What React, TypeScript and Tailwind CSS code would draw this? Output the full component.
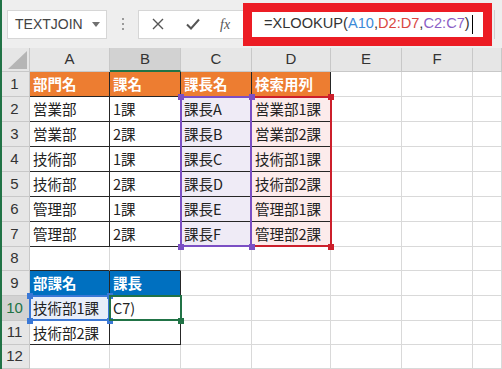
import React from "react";

const COLS = [30, 80, 71, 71, 79, 71, 71, 29];
const ROWS = [25, 25, 25, 25, 25, 25, 25, 24, 25, 25, 24, 24];
const LETTERS = ["A", "B", "C", "D", "E", "F", ""];

type Cell = { text?: string; kind?: "orange" | "blue" | "purple" | "pink" | "ref" | "plain" };

const data: Record<number, Cell[]> = {
  1: [
    { text: "部門名", kind: "orange" },
    { text: "課名", kind: "orange" },
    { text: "課長名", kind: "orange" },
    { text: "検索用列", kind: "orange" },
  ],
  2: [{ text: "営業部" }, { text: "1課" }, { text: "課長A", kind: "purple" }, { text: "営業部1課", kind: "pink" }],
  3: [{ text: "営業部" }, { text: "2課" }, { text: "課長B", kind: "purple" }, { text: "営業部2課", kind: "pink" }],
  4: [{ text: "技術部" }, { text: "1課" }, { text: "課長C", kind: "purple" }, { text: "技術部1課", kind: "pink" }],
  5: [{ text: "技術部" }, { text: "2課" }, { text: "課長D", kind: "purple" }, { text: "技術部2課", kind: "pink" }],
  6: [{ text: "管理部" }, { text: "1課" }, { text: "課長E", kind: "purple" }, { text: "管理部1課", kind: "pink" }],
  7: [{ text: "管理部" }, { text: "2課" }, { text: "課長F", kind: "purple" }, { text: "管理部2課", kind: "pink" }],
  9: [
    { text: "部課名", kind: "blue" },
    { text: "課長", kind: "blue" },
  ],
  10: [{ text: "技術部1課", kind: "ref" }, { text: "C7)" }],
  11: [{ text: "技術部2課" }, { text: "" }],
};

const fillFor: Record<string, string> = {
  orange: "bg-[#ed7d31] text-white font-bold",
  blue: "bg-[#0070c0] text-white font-bold",
  purple: "bg-[#efebf6] text-[#222]",
  pink: "bg-[#fcebeb] text-[#222]",
  ref: "bg-[#e8eef9] text-[#222]",
  plain: "bg-white text-[#222]",
};

function inTable(row: number, col: number) {
  if (row >= 1 && row <= 7 && col <= 3) return true;
  if (row >= 9 && row <= 11 && col <= 1) return true;
  return false;
}

function Handle({ x, y, color }: { x: number; y: number; color: string }) {
  return (
    <div
      className="absolute w-[6px] h-[6px]"
      style={{ left: x - 3, top: y - 3, background: color }}
    />
  );
}

function RangeBox({ x, y, w, h, color, handles }: { x: number; y: number; w: number; h: number; color: string; handles: [number, number][] }) {
  return (
    <>
      <div
        className="absolute border-2 pointer-events-none"
        style={{ left: x - 1, top: y - 1, width: w + 1, height: h + 1, borderColor: color }}
      />
      {handles.map(([hx, hy], i) => (
        <Handle key={i} x={hx} y={hy} color={color} />
      ))}
    </>
  );
}

export default function App() {
  const colX = COLS.reduce<number[]>((acc, w, i) => [...acc, (acc[i] ?? 0) + w], [0]);
  const rowY = ROWS.reduce<number[]>((acc, h, i) => [...acc, (acc[i] ?? 24) + h], [24]);

  return (
    <div className="w-[502px] h-[369px] overflow-hidden bg-white border-l-2 border-[#217346] relative font-['Liberation_Sans','Noto_Sans_CJK_JP',sans-serif]">
      {/* formula bar */}
      <div className="h-[48px] bg-[#eeeeee] flex items-center -ml-[2px] pl-[7px]">
        <div className="w-[100px] h-[29px] bg-white border border-[#d6d6d6] flex items-center pl-[7px] pr-[6px] justify-between">
          <span className="text-[14px] text-[#444]">TEXTJOIN</span>
          <span className="w-0 h-0 border-l-[4px] border-r-[4px] border-t-[5px] border-l-transparent border-r-transparent border-t-[#707070]" />
        </div>
        <div className="w-[31px] flex flex-col items-center gap-[3px]">
          <span className="w-[2px] h-[2px] bg-[#9a9a9a]" />
          <span className="w-[2px] h-[2px] bg-[#9a9a9a]" />
          <span className="w-[2px] h-[2px] bg-[#9a9a9a]" />
        </div>
        <div className="w-[105px] h-[29px] bg-white border border-r-0 border-[#d6d6d6] flex items-center">
          <svg width="12" height="12" viewBox="0 0 12 12" className="ml-[13px]">
            <path d="M1 1 L11 11 M11 1 L1 11" stroke="#555" strokeWidth="1.4" />
          </svg>
          <svg width="14" height="12" viewBox="0 0 14 12" className="ml-[22px]">
            <path d="M1 6.5 L5 10.5 L13 1.5" stroke="#555" strokeWidth="2" fill="none" />
          </svg>
          <span className="ml-[20px] text-[14px] italic text-[#555] font-['Liberation_Serif',serif]">fx</span>
        </div>
        <div className="w-[249px] h-[43px] border-[9px] border-[#ec1c24] bg-white flex items-center pl-[12px]">
          <span className="text-[14.6px] text-[#333] whitespace-nowrap">
            =XLOOKUP(<span className="text-[#3b8ad8]">A10</span>,<span className="text-[#d9473f]">D2:D7</span>,<span className="text-[#8b5fc6]">C2:C7</span>)
          </span>
          <span className="w-[1px] h-[19px] bg-black ml-[2px]" />
        </div>
        <div className="w-[3px] h-[29px] border-r border-[#cfcfcf]" />
      </div>

      {/* sheet */}
      <div className="relative -ml-[2px]">
        {/* column header */}
        <div className="flex h-[24px] bg-[#e6e6e6]">
          <div className="relative w-[30px] h-full border-r border-b border-[#c8c8c8]">
            <svg width="19" height="18" viewBox="0 0 19 18" className="absolute left-[8px] top-[3px]">
              <path d="M19 0 L19 18 L0 18 Z" fill="#b5b5b5" />
            </svg>
          </div>
          {LETTERS.map((l, i) => (
            <div
              key={i}
              style={{ width: COLS[i + 1] }}
              className={`h-full flex items-center justify-center text-[15px] text-[#333] border-r border-[#c8c8c8] ${
                i === 1 ? "bg-[#d2d2d2] border-b-2 border-b-[#217346]" : "border-b border-b-[#c8c8c8]"
              }`}
            >
              {l}
            </div>
          ))}
        </div>

        {/* rows */}
        {ROWS.map((h, ri) => {
          const row = ri + 1;
          const cells = data[row] ?? [];
          return (
            <div key={row} className="flex" style={{ height: h }}>
              <div
                className={`w-[30px] h-full flex items-center justify-center text-[15px] border-r border-b border-[#c8c8c8] ${
                  row === 10 ? "bg-[#d2d2d2] text-[#217346]" : "bg-[#e6e6e6] text-[#333]"
                }`}
              >
                {row}
              </div>
              {COLS.slice(1).map((w, ci) => {
                const cell = cells[ci];
                const table = inTable(row, ci);
                const belowIsTable = inTable(row + 1, ci);
                const rightIsTable = inTable(row, ci + 1);
                const kind = cell ? cell.kind ?? "plain" : "plain";
                return (
                  <div
                    key={ci}
                    style={{ width: w }}
                    className={`h-full flex items-center pl-[3px] text-[14.5px] whitespace-nowrap overflow-hidden border-r border-b font-['Noto_Sans_CJK_JP',sans-serif] ${
                      table || rightIsTable ? "border-r-[#262626]" : "border-r-[#d9d9d9]"
                    } ${table || belowIsTable ? "border-b-[#262626]" : "border-b-[#d9d9d9]"} ${fillFor[kind]}`}
                  >
                    {cell?.text}
                  </div>
                );
              })}
            </div>
          );
        })}

        {/* reference highlights */}
        <RangeBox
          x={colX[3]}
          y={rowY[1]}
          w={COLS[3]}
          h={rowY[7] - rowY[1]}
          color="#7b4fc4"
          handles={[
            [colX[3], rowY[1]],
            [colX[4], rowY[1]],
            [colX[3], rowY[7]],
            [colX[4], rowY[7]],
          ]}
        />
        <div
          className="absolute border-2 border-l-0 border-[#cc1f2b]"
          style={{ left: colX[4] + 1, top: rowY[1] - 1, width: COLS[4], height: rowY[7] - rowY[1] + 1 }}
        />
        <Handle x={colX[5]} y={rowY[1]} color="#cc1f2b" />
        <Handle x={colX[5]} y={rowY[7]} color="#cc1f2b" />
        <Handle x={colX[4]} y={rowY[1]} color="#7b4fc4" />
        <Handle x={colX[4]} y={rowY[7]} color="#7b4fc4" />

        <RangeBox
          x={colX[1]}
          y={rowY[9]}
          w={COLS[1]}
          h={ROWS[9]}
          color="#3a78d6"
          handles={[
            [colX[1], rowY[9]],
            [colX[2], rowY[9]],
            [colX[1], rowY[10]],
            [colX[2], rowY[10]],
          ]}
        />
        <div
          className="absolute border-2 border-[#217346]"
          style={{ left: colX[2] - 1, top: rowY[9] - 1, width: COLS[2] + 2, height: ROWS[9] + 1 }}
        />
        <Handle x={colX[3]} y={rowY[10]} color="#217346" />
      </div>
    </div>
  );
}
